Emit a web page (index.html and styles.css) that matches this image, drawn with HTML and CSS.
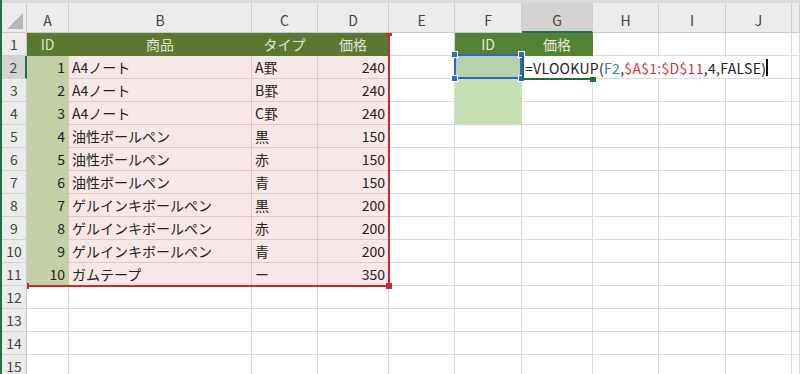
FILE: index.html
```html
<!DOCTYPE html>
<html>
<head>
    <title>Book1 - Excel</title>
    <meta charset="utf-8">
    <link rel="stylesheet" href="styles.css">
</head>
<body>
    <div class="topbar"></div>
    <div class="sheet">
        <!-- column headers -->
        <div class="corner"><span class="tri"></span></div>
        <div class="hd">A</div>
        <div class="hd">B</div>
        <div class="hd">C</div>
        <div class="hd">D</div>
        <div class="hd">E</div>
        <div class="hd">F</div>
        <div class="hd hd-on">G</div>
        <div class="hd">H</div>
        <div class="hd">I</div>
        <div class="hd">J</div>
        <div class="hd"></div>

        <!-- row 1 -->
        <div class="rh">1</div>
        <div class="c th ctr">ID</div>
        <div class="c th ctr">商品</div>
        <div class="c th ctr">タイプ</div>
        <div class="c th ctr">価格</div>
        <div class="c"></div>
        <div class="c fh ctr">ID</div>
        <div class="c fh ctr">価格</div>
        <div class="c"></div><div class="c"></div><div class="c"></div><div class="c"></div>

        <!-- row 2 -->
        <div class="rh rh-on">2</div>
        <div class="c id num">1</div>
        <div class="c pk">A4ノート</div>
        <div class="c pk">A罫</div>
        <div class="c pk num">240</div>
        <div class="c"></div>
        <div class="c sel"></div>
        <div class="c edit"><span class="formula">=VLOOKUP(<span class="ref-b">F2</span>,<span class="ref-r">$A$1:$D$11</span>,4,FALSE)</span></div>
        <div class="c"></div><div class="c"></div><div class="c"></div><div class="c"></div>

        <!-- row 3 -->
        <div class="rh">3</div>
        <div class="c id num">2</div>
        <div class="c pk">A4ノート</div>
        <div class="c pk">B罫</div>
        <div class="c pk num">240</div>
        <div class="c"></div>
        <div class="c fl"></div>
        <div class="c"></div>
        <div class="c"></div><div class="c"></div><div class="c"></div><div class="c"></div>

        <!-- row 4 -->
        <div class="rh">4</div>
        <div class="c id num">3</div>
        <div class="c pk">A4ノート</div>
        <div class="c pk">C罫</div>
        <div class="c pk num">240</div>
        <div class="c"></div>
        <div class="c fl"></div>
        <div class="c"></div>
        <div class="c"></div><div class="c"></div><div class="c"></div><div class="c"></div>

        <!-- row 5 -->
        <div class="rh">5</div>
        <div class="c id num">4</div>
        <div class="c pk">油性ボールペン</div>
        <div class="c pk">黒</div>
        <div class="c pk num">150</div>
        <div class="c"></div><div class="c"></div><div class="c"></div>
        <div class="c"></div><div class="c"></div><div class="c"></div><div class="c"></div>

        <!-- row 6 -->
        <div class="rh">6</div>
        <div class="c id num">5</div>
        <div class="c pk">油性ボールペン</div>
        <div class="c pk">赤</div>
        <div class="c pk num">150</div>
        <div class="c"></div><div class="c"></div><div class="c"></div>
        <div class="c"></div><div class="c"></div><div class="c"></div><div class="c"></div>

        <!-- row 7 -->
        <div class="rh">7</div>
        <div class="c id num">6</div>
        <div class="c pk">油性ボールペン</div>
        <div class="c pk">青</div>
        <div class="c pk num">150</div>
        <div class="c"></div><div class="c"></div><div class="c"></div>
        <div class="c"></div><div class="c"></div><div class="c"></div><div class="c"></div>

        <!-- row 8 -->
        <div class="rh">8</div>
        <div class="c id num">7</div>
        <div class="c pk">ゲルインキボールペン</div>
        <div class="c pk">黒</div>
        <div class="c pk num">200</div>
        <div class="c"></div><div class="c"></div><div class="c"></div>
        <div class="c"></div><div class="c"></div><div class="c"></div><div class="c"></div>

        <!-- row 9 -->
        <div class="rh">9</div>
        <div class="c id num">8</div>
        <div class="c pk">ゲルインキボールペン</div>
        <div class="c pk">赤</div>
        <div class="c pk num">200</div>
        <div class="c"></div><div class="c"></div><div class="c"></div>
        <div class="c"></div><div class="c"></div><div class="c"></div><div class="c"></div>

        <!-- row 10 -->
        <div class="rh">10</div>
        <div class="c id num">9</div>
        <div class="c pk">ゲルインキボールペン</div>
        <div class="c pk">青</div>
        <div class="c pk num">200</div>
        <div class="c"></div><div class="c"></div><div class="c"></div>
        <div class="c"></div><div class="c"></div><div class="c"></div><div class="c"></div>

        <!-- row 11 -->
        <div class="rh">11</div>
        <div class="c id num">10</div>
        <div class="c pk">ガムテープ</div>
        <div class="c pk">ー</div>
        <div class="c pk num">350</div>
        <div class="c"></div><div class="c"></div><div class="c"></div>
        <div class="c"></div><div class="c"></div><div class="c"></div><div class="c"></div>

        <!-- rows 12-15 -->
        <div class="rh">12</div>
        <div class="c"></div><div class="c"></div><div class="c"></div><div class="c"></div><div class="c"></div><div class="c"></div>
        <div class="c"></div><div class="c"></div><div class="c"></div><div class="c"></div><div class="c"></div>
        <div class="rh">13</div>
        <div class="c"></div><div class="c"></div><div class="c"></div><div class="c"></div><div class="c"></div><div class="c"></div>
        <div class="c"></div><div class="c"></div><div class="c"></div><div class="c"></div><div class="c"></div>
        <div class="rh">14</div>
        <div class="c"></div><div class="c"></div><div class="c"></div><div class="c"></div><div class="c"></div><div class="c"></div>
        <div class="c"></div><div class="c"></div><div class="c"></div><div class="c"></div><div class="c"></div>
        <div class="rh">15</div>
        <div class="c"></div><div class="c"></div><div class="c"></div><div class="c"></div><div class="c"></div><div class="c"></div>
        <div class="c"></div><div class="c"></div><div class="c"></div><div class="c"></div><div class="c"></div>

        <!-- reference highlights drawn over the cells -->
        <div class="range range-red">
            <span class="h h-tl"></span><span class="h h-tr"></span>
            <span class="h h-bl"></span><span class="h h-br"></span>
        </div>
        <div class="range range-blue">
            <span class="h h-tl"></span><span class="h h-tr"></span>
            <span class="h h-bl"></span><span class="h h-br"></span>
        </div>
        <div class="range active"><span class="fill"></span></div>
    </div>
</body>
</html>
```

FILE: styles.css
```css
body {
    margin: 0;
    overflow: hidden;
    background: white;
    font-family: "Noto Sans CJK JP", "Noto Sans", sans-serif;
    font-size: 14px;
    color: #222;
    border-left: 2px solid #217346;
}
.topbar {
    height: 3px;
    background: #dadada;
}
.sheet {
    position: relative;
    display: grid;
    grid-template-columns: 25px 42px 183px 66px 71px 66px 67px 71px 66px 67px 66px 1fr;
    grid-template-rows: 30px repeat(15, 23px);
}

/* headers */
.corner {
    position: relative;
    background: #ececec;
    border-right: 1px solid #c9c9c9;
    border-bottom: 1px solid #c9c9c9;
    box-sizing: border-box;
}
.tri {
    position: absolute;
    right: 3px;
    bottom: 3px;
    width: 16px;
    height: 16px;
    background: #b8b8b8;
    clip-path: polygon(100% 0, 100% 100%, 0 100%);
}
.hd {
    display: flex;
    align-items: center;
    justify-content: center;
    padding-top: 5px;
    background: #ececec;
    color: #444;
    border-right: 1px solid #cdcdcd;
    border-bottom: 1px solid #c9c9c9;
    box-sizing: border-box;
}
.hd-on {
    background: #d3d3d3;
    border-bottom: 2px solid #217346;
}
.rh {
    display: flex;
    align-items: center;
    justify-content: center;
    background: #ececec;
    color: #444;
    border-right: 1px solid #c9c9c9;
    border-bottom: 1px solid #d2d2d2;
    box-sizing: border-box;
}
.rh-on {
    background: #d3d3d3;
    border-right: 2px solid #217346;
}

/* cells */
.c {
    display: flex;
    align-items: center;
    padding: 0 3px;
    border-right: 1px solid #dadada;
    border-bottom: 1px solid #dadada;
    box-sizing: border-box;
    white-space: nowrap;
    line-height: 22px;
}
.ctr { justify-content: center; }
.num { justify-content: flex-end; }
.th {
    background: #5a7a32;
    border-color: #5a7a32;
    color: #dfe6d3;
}
.fh {
    background: #548235;
    border-color: #548235;
    color: #e4eddc;
}
.id {
    background: #c4cfa5;
    border-color: #c4cfa5;
}
.pk {
    background: #f8e7e7;
    border-color: #dccaca;
}
.fl {
    background: #c6e0b4;
    border-color: #c6e0b4;
}
.sel {
    background: #b5d1b0;
    border-color: #b5d1b0;
}

/* cell being edited */
.edit { padding: 0; }
.formula {
    position: relative;
    z-index: 1;
    height: 21px;
    padding: 0 6px 0 3px;
    background: white;
    color: #222;
    letter-spacing: 0.3px;
}
.formula::after {
    content: "";
    position: absolute;
    right: 4px;
    top: 2px;
    width: 2px;
    height: 17px;
    background: #111;
}
.ref-b { color: #3b73d6; }
.ref-r { color: #d0353d; }

/* range outlines */
.range {
    position: absolute;
    inset: 0;
    z-index: 2;
    pointer-events: none;
}
.range-red {
    grid-column: 2 / 6;
    grid-row: 2 / 13;
    right: -1px;
    bottom: -1px;
    border-right: 2px solid #c42b33;
    border-bottom: 2px solid #c42b33;
}
.range-red .h { background: #c42b33; }
.range-red .h-tl { left: 0; top: 0; width: 2px; height: 2px; }
.range-red .h-tr { right: -4px; top: 0; width: 6px; height: 3px; }
.range-red .h-bl { left: 0; bottom: -4px; width: 2px; height: 6px; }
.range-red .h-br { right: -4px; bottom: -4px; width: 6px; height: 6px; }

.range-blue {
    grid-column: 7 / 8;
    grid-row: 3 / 4;
    top: -2px;
    left: -1px;
    border: 2px solid #3466c8;
}
.range-blue .h {
    background: #3466c8;
    width: 5px;
    height: 5px;
    border: 1px solid white;
}
.range-blue .h-tl { left: -5px; top: -5px; }
.range-blue .h-tr { right: -5px; top: -5px; }
.range-blue .h-bl { left: -5px; bottom: -5px; }
.range-blue .h-br { right: -5px; bottom: -5px; }

.h { position: absolute; }

.active {
    grid-column: 8 / 9;
    grid-row: 3 / 4;
    left: 0;
    bottom: -1px;
    border-left: 2px solid #1e6b3c;
    border-bottom: 2px solid #1e6b3c;
}
.fill {
    position: absolute;
    right: -3px;
    bottom: -4px;
    width: 6px;
    height: 5px;
    background: #1e6b3c;
}
```
